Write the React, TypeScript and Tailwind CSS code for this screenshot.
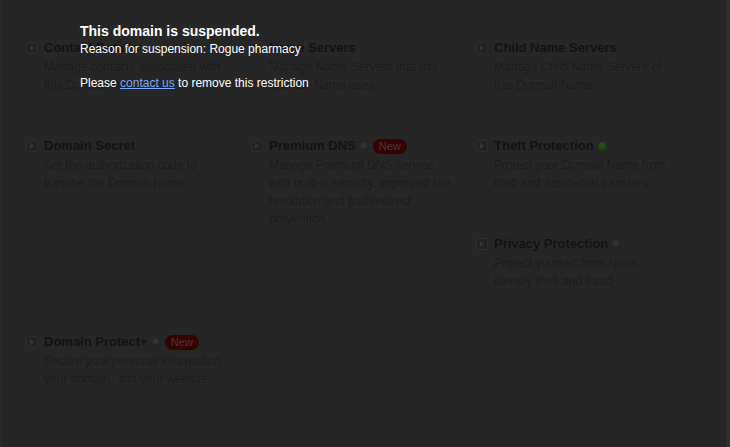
import React from 'react'

type Item = {
  title: string
  desc: string
  dot?: 'gray' | 'green'
  isNew?: boolean
} | null

const items: Item[] = [
  { title: 'Contact Details', desc: 'Manage contacts associated with this Domain Name' },
  { title: 'Name Servers', desc: 'Manage Name Servers that this Domain Name uses' },
  { title: 'Child Name Servers', desc: 'Manage Child Name Servers of this Domain Name' },
  { title: 'Domain Secret', desc: 'Set the authorization code to transfer the Domain Name' },
  { title: 'Premium DNS', desc: 'Manage Premium DNS service with built-in security, improved site resolution and bad redirect prevention', dot: 'gray', isNew: true },
  { title: 'Theft Protection', desc: 'Protect your Domain Name from theft and accidental transfers', dot: 'green' },
  null,
  null,
  { title: 'Privacy Protection', desc: 'Protect yourself from spam, identity theft and fraud', dot: 'gray' },
  { title: 'Domain Protect+', desc: 'Secure your personal information, your domain, and your website', dot: 'gray', isNew: true },
]

function ArrowBox() {
  return (
    <span className="mt-[2px] flex h-[12px] w-[12px] shrink-0 items-center justify-center rounded-[2px] border border-[#2f2f2f] bg-[#232323]">
      <svg width="4" height="6" viewBox="0 0 4 6">
        <path d="M0 0 L4 3 L0 6 Z" fill="#353535" />
      </svg>
    </span>
  )
}

function Dot({ kind }: { kind: 'gray' | 'green' }) {
  return kind === 'green' ? (
    <span className="inline-block h-[9px] w-[9px] rounded-full bg-[radial-gradient(circle_at_40%_35%,#285a16,#10300a)]" />
  ) : (
    <span className="inline-block h-[9px] w-[9px] rounded-full bg-[radial-gradient(circle_at_40%_35%,#3a3a3a,#161616)]" />
  )
}

function Card({ item }: { item: Item }) {
  if (!item) return <div className="h-[98px]" />
  return (
    <div className="flex h-[98px] gap-[6px]">
      <ArrowBox />
      <div className="w-[188px]">
        <div className="flex h-[16px] items-center gap-[4px]">
          <span className="text-[13px] font-bold leading-[16px] text-[#121212]">{item.title}</span>
          {item.dot && <Dot kind={item.dot} />}
          {item.isNew && (
            <span className="rounded-full bg-[#350202] px-[6px] text-[11px] leading-[15px] text-[#4c3a3a]">New</span>
          )}
        </div>
        <p className="mt-[2px] text-[12px] leading-[18px] text-[#1c1c1c]">{item.desc}</p>
      </div>
    </div>
  )
}

export default function App() {
  return (
    <div className="relative h-[447px] w-[730px] overflow-hidden border-l border-r-4 border-l-[#2b2b2b] border-r-[#2f2f2f] bg-[#262626] font-['Liberation_Sans',Arial,sans-serif]">
      <div className="grid grid-cols-[225px_225px_225px] pl-[25px] pt-[40px]">
        {items.map((it, i) => (
          <Card key={i} item={it} />
        ))}
      </div>

      <div className="absolute left-[79px] top-[23px] text-white">
        <div className="text-[14px] font-bold leading-[16px]">This domain is suspended.</div>
        <div className="mt-[2px] text-[12px] leading-[17px]">Reason for suspension: Rogue pharmacy</div>
        <div className="mt-[17px] text-[12px] leading-[17px]">
          Please <a href="#" className="text-[#77aaff] underline">contact us</a> to remove this restriction
        </div>
      </div>
    </div>
  )
}
